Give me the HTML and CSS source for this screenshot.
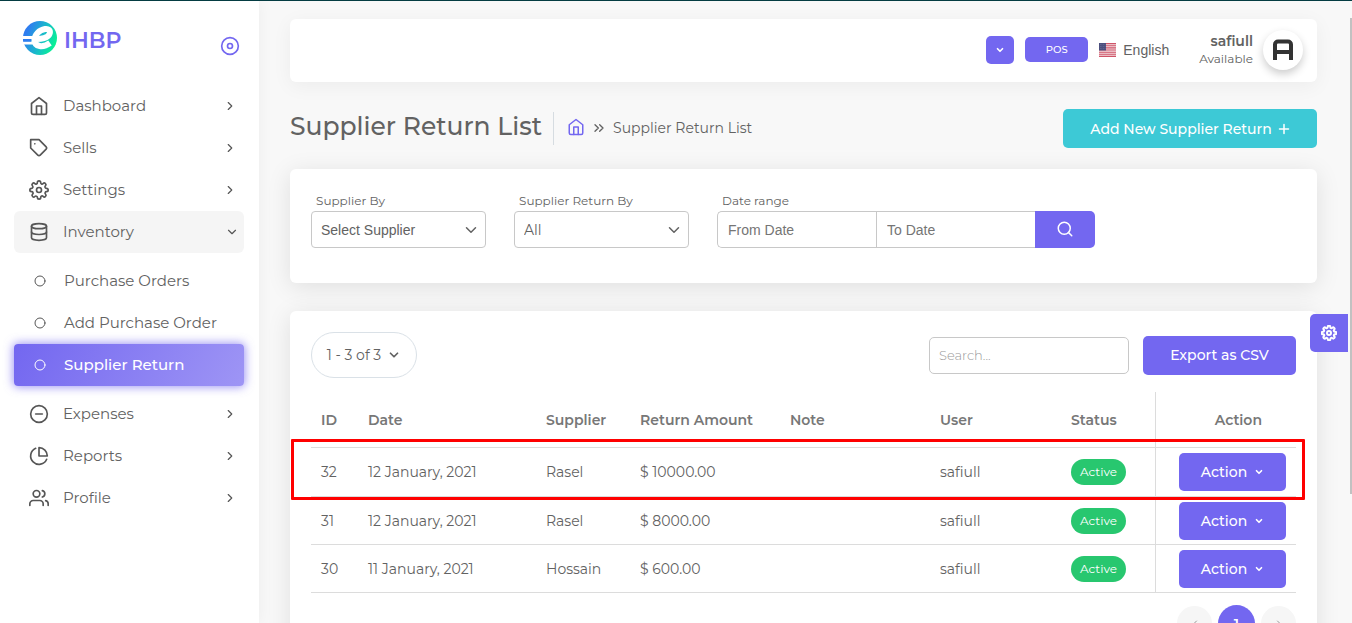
FILE: index.html
```html
<!DOCTYPE html>
<html lang="en">
<head>
<meta charset="utf-8">
<title>Supplier Return List - IHBP</title>
<meta name="viewport" content="width=device-width, initial-scale=1">
<link rel="stylesheet" href="styles.css">
</head>
<body>
<svg class="sprite" aria-hidden="true">
  <symbol id="home" viewBox="0 0 24 24"><path d="M3 9l9-7 9 7v11a2 2 0 0 1-2 2H5a2 2 0 0 1-2-2z"/><path d="M9 22V12h6v10"/></symbol>
  <symbol id="tag" viewBox="0 0 24 24"><path d="M20.59 13.41l-7.17 7.17a2 2 0 0 1-2.83 0L2 12V2h10l8.59 8.59a2 2 0 0 1 0 2.82z"/><path d="M7 7h.01"/></symbol>
  <symbol id="gear" viewBox="0 0 24 24"><circle cx="12" cy="12" r="3"/><path d="M19.4 15a1.65 1.65 0 0 0 .33 1.82l.06.06a2 2 0 0 1-2.83 2.83l-.06-.06a1.65 1.65 0 0 0-2.8 1.17V21a2 2 0 0 1-4 0v-.09A1.65 1.65 0 0 0 9 19.4a1.65 1.65 0 0 0-1.82.33l-.06.06a2 2 0 0 1-2.83-2.83l.06-.06A1.65 1.65 0 0 0 3.090 14H3a2 2 0 0 1 0-4h.09A1.65 1.65 0 0 0 4.6 9a1.65 1.65 0 0 0-.33-1.82l-.06-.06a2 2 0 0 1 2.830-2.83l.06.06A1.65 1.65 0 0 0 10 3.090V3a2 2 0 0 1 4 0v.09a1.65 1.65 0 0 0 2.820 1.240l.06-.06a2 2 0 0 1 2.830 2.830l-.06.06A1.65 1.65 0 0 0 20.910 10H21a2 2 0 0 1 0 4h-.09a1.65 1.65 0 0 0-1.510 1z"/></symbol>
  <symbol id="database" viewBox="0 0 24 24"><ellipse cx="12" cy="5" rx="9" ry="3"/><path d="M21 12c0 1.660-4 3-9 3s-9-1.340-9-3"/><path d="M3 5v14c0 1.660 4 3 9 3s9-1.340 9-3V5"/></symbol>
  <symbol id="minus-circle" viewBox="0 0 24 24"><circle cx="12" cy="12" r="10"/><path d="M8 12h8"/></symbol>
  <symbol id="pie" viewBox="0 0 24 24"><path d="M21.210 15.890A10 10 0 1 1 8 2.830"/><path d="M22 12A10 10 0 0 0 12 2v10z"/></symbol>
  <symbol id="users" viewBox="0 0 24 24"><path d="M17 21v-2a4 4 0 0 0-4-4H5a4 4 0 0 0-4 4v2"/><circle cx="9" cy="7" r="4"/><path d="M23 21v-2a4 4 0 0 0-3-3.870"/><path d="M16 3.130a4 4 0 0 1 0 7.750"/></symbol>
  <symbol id="right" viewBox="0 0 24 24"><path d="M9 18l6-6-6-6"/></symbol>
  <symbol id="left" viewBox="0 0 24 24"><path d="M15 18l-6-6 6-6"/></symbol>
  <symbol id="double-right" viewBox="0 0 24 24"><path d="M13 17l5-5-5-5M6 17l5-5-5-5"/></symbol>
  <symbol id="down" viewBox="0 0 24 24"><path d="M6 9l6 6 6-6"/></symbol>
  <symbol id="ring" viewBox="0 0 24 24"><circle cx="12" cy="12" r="10"/></symbol>
  <symbol id="disc" viewBox="0 0 24 24"><circle cx="12" cy="12" r="10"/><circle cx="12" cy="12" r="3"/></symbol>
  <symbol id="search" viewBox="0 0 24 24"><circle cx="11" cy="11" r="8"/><path d="M21 21l-4.350-4.350"/></symbol>
  <symbol id="plus" viewBox="0 0 24 24"><path d="M12 3v18M3 12h18"/></symbol>
</svg>
<div class="app">
  <aside class="sidebar">
    <div class="brand">
      <a class="brand-link" href="#">
        <svg class="logo" viewBox="0 0 36 36" aria-hidden="true">
          <defs><linearGradient id="lg" x1="0" x2="1" y1="0.3" y2="0.7"><stop offset="0.1" stop-color="#2f7df0"/><stop offset="0.6" stop-color="#16c3c4"/><stop offset="1" stop-color="#06f98c"/></linearGradient></defs>
          <circle cx="18" cy="18" r="17" fill="url(#lg)"/>
          <path d="M0 17.500h11M0 23h12" stroke="#fff" stroke-width="3"/>
          <path d="M1 19h8v2.600H1z" fill="#2f7df0"/>
          <path d="M13 19C19 19.500 26 18 27.500 14C29 10 26 8.500 23 9C17 10 12.500 15 12.500 20C12.500 27 21 28 28 23" fill="none" stroke="#fff" stroke-width="6"/>
        </svg>
        <span class="brand-name">IHBP</span>
      </a>
      <button class="plain pin" aria-label="Toggle menu"><svg class="icon i20"><use href="#disc"/></svg></button>
    </div>
    <nav class="menu" aria-label="Main">
      <a class="item" href="#"><svg class="icon i20"><use href="#home"/></svg><span>Dashboard</span><svg class="icon i14"><use href="#right"/></svg></a>
      <a class="item" href="#"><svg class="icon i20"><use href="#tag"/></svg><span>Sells</span><svg class="icon i14"><use href="#right"/></svg></a>
      <a class="item" href="#"><svg class="icon i20"><use href="#gear"/></svg><span>Settings</span><svg class="icon i14"><use href="#right"/></svg></a>
      <a class="item open" href="#"><svg class="icon i20"><use href="#database"/></svg><span>Inventory</span><svg class="icon i14"><use href="#down"/></svg></a>
      <div class="submenu">
        <a class="item sub" href="#"><svg class="icon i12"><use href="#ring"/></svg><span>Purchase Orders</span></a>
        <a class="item sub" href="#"><svg class="icon i12"><use href="#ring"/></svg><span>Add Purchase Order</span></a>
        <a class="item sub active" href="#" aria-current="page"><svg class="icon i12"><use href="#ring"/></svg><span>Supplier Return</span></a>
      </div>
      <a class="item" href="#"><svg class="icon i20"><use href="#minus-circle"/></svg><span>Expenses</span><svg class="icon i14"><use href="#right"/></svg></a>
      <a class="item" href="#"><svg class="icon i20"><use href="#pie"/></svg><span>Reports</span><svg class="icon i14"><use href="#right"/></svg></a>
      <a class="item" href="#"><svg class="icon i20"><use href="#users"/></svg><span>Profile</span><svg class="icon i14"><use href="#right"/></svg></a>
    </nav>
  </aside>

  <main class="main">
    <header class="card topbar">
      <button class="btn square" aria-label="Quick menu"><svg class="icon i10 bold"><use href="#down"/></svg></button>
      <button class="btn pos">POS</button>
      <a class="lang" href="#">
        <svg class="flag" viewBox="0 0 17 14" aria-hidden="true"><path fill="#f3dfe2" d="M0 0h17v14H0z"/><path stroke="#cf5468" stroke-width="1.100" d="M0 .6h17M0 2.700h17M0 4.900h17M0 7h17M0 9.200h17M0 11.300h17M0 13.400h17"/><path fill="#4c4f7e" d="M0 0h7v7.500H0z"/><path stroke="#8586a8" stroke-width=".6" stroke-dasharray=".6 1" d="M1 1.500h5.500M1 3.500h5.500M1 5.500h5.500"/></svg>
        <span>English</span>
      </a>
      <div class="user"><strong>safiull</strong><span>Available</span></div>
      <button class="avatar" aria-label="Account"><svg viewBox="0 0 22 22" aria-hidden="true"><path d="M3 21V5.500a3 3 0 0 1 3-3h10a3 3 0 0 1 3 3V21M3 13h16" fill="none" stroke="#333" stroke-width="4"/></svg></button>
    </header>

    <div class="heading">
      <h1>Supplier Return List</h1>
      <nav class="crumbs" aria-label="Breadcrumb">
        <a href="#" aria-label="Home"><svg class="icon i18"><use href="#home"/></svg></a>
        <svg class="icon i16"><use href="#double-right"/></svg>
        <span>Supplier Return List</span>
      </nav>
      <button class="btn add">Add New Supplier Return <svg class="icon i12"><use href="#plus"/></svg></button>
    </div>

    <form class="card filters">
      <div class="field">
        <label for="supplier">Supplier By</label>
        <div class="select"><select id="supplier"><option>Select Supplier</option></select><svg class="icon i18"><use href="#down"/></svg></div>
      </div>
      <div class="field">
        <label for="return-by">Supplier Return By</label>
        <div class="select"><select id="return-by" class="light"><option>All</option></select><svg class="icon i18"><use href="#down"/></svg></div>
      </div>
      <div class="field range">
        <label for="from">Date range</label>
        <div class="group">
          <input id="from" type="text" placeholder="From Date">
          <input type="text" placeholder="To Date" aria-label="To Date">
          <button class="btn find" type="button" aria-label="Search"><svg class="icon i18"><use href="#search"/></svg></button>
        </div>
      </div>
    </form>

    <section class="card list">
      <div class="tools">
        <button class="pager">1 - 3 of 3 <svg class="icon i14"><use href="#down"/></svg></button>
        <input class="search" type="text" placeholder="Search..." aria-label="Search">
        <button class="btn export">Export as CSV</button>
      </div>
      <table>
        <colgroup><col class="c-id"><col class="c-date"><col class="c-sup"><col class="c-amt"><col class="c-note"><col class="c-user"><col class="c-stat"><col class="c-act"></colgroup>
        <thead><tr><th>ID</th><th>Date</th><th>Supplier</th><th>Return Amount</th><th>Note</th><th>User</th><th>Status</th><th>Action</th></tr></thead>
        <tbody>
          <tr class="marked"><td>32</td><td>12 January, 2021</td><td>Rasel</td><td>$ 10000.00</td><td></td><td>safiull</td><td><span class="badge">Active</span></td><td><button class="btn action">Action <svg class="icon i10 bold"><use href="#down"/></svg></button></td></tr>
          <tr><td>31</td><td>12 January, 2021</td><td>Rasel</td><td>$ 8000.00</td><td></td><td>safiull</td><td><span class="badge">Active</span></td><td><button class="btn action">Action <svg class="icon i10 bold"><use href="#down"/></svg></button></td></tr>
          <tr><td>30</td><td>11 January, 2021</td><td>Hossain</td><td>$ 600.00</td><td></td><td>safiull</td><td><span class="badge">Active</span></td><td><button class="btn action">Action <svg class="icon i10 bold"><use href="#down"/></svg></button></td></tr>
        </tbody>
      </table>
      <nav class="pages" aria-label="Pages">
        <button class="page" aria-label="Previous"><svg class="icon i12"><use href="#left"/></svg></button>
        <button class="page current">1</button>
        <button class="page" aria-label="Next"><svg class="icon i12"><use href="#right"/></svg></button>
      </nav>
    </section>
  </main>
  <button class="btn customize" aria-label="Customize"><svg class="icon i16"><use href="#gear"/></svg></button>
  <div class="scroll"></div>
</div>
</body>
</html>
```
FILE: styles.css
```css
* { box-sizing: border-box; }

body {
  margin: 0;
  background: #f8f8f8;
  color: #626262;
  font: 400 14px/20px Montserrat, Inter, sans-serif;
}

button, input, select { font: inherit; color: inherit; margin: 0; }
button { cursor: pointer; }
a { color: inherit; text-decoration: none; }

.sprite { position: absolute; width: 0; height: 0; }
.icon { fill: none; stroke: currentColor; stroke-width: 2; stroke-linecap: round; stroke-linejoin: round; flex: none; }
.bold { stroke-width: 4; }
.i10 { width: 10px; height: 10px; }
.i12 { width: 12px; height: 12px; }
.i14 { width: 14px; height: 14px; }
.i16 { width: 16px; height: 16px; }
.i18 { width: 18px; height: 18px; }
.i20 { width: 20px; height: 20px; }

.app {
  position: relative;
  display: flex;
  height: 100vh;
  overflow: hidden;
  border-top: 1px solid #043c42;
}

/* Sidebar */
.sidebar {
  flex: 0 0 259px;
  background: #fff;
  box-shadow: 0 0 15px rgba(0, 0, 0, .05);
}
.brand { display: flex; align-items: flex-start; justify-content: space-between; padding: 19px 19px 0 22px; }
.brand-link { display: flex; align-items: flex-start; gap: 6px; }
.logo { width: 36px; height: 36px; }
.brand-name { color: #7367f0; font-size: 22px; font-weight: 600; line-height: 42px; }
.plain { border: 0; padding: 0; background: none; }
.pin { display: flex; color: #7367f0; padding-top: 16px; }

.menu { padding: 23px 15px 0 14px; }
.item {
  display: flex;
  align-items: center;
  height: 42px;
  padding: 0 7px 0 15px;
  border-radius: 4px;
  font-size: 15px;
}
.item span { flex: 1; margin-left: 14px; }
.item .icon { color: #565656; }
.item.open { background: #f5f5f5; border-radius: 6px; }
.item.open .i14:last-child { margin-right: -2px; }
.submenu { padding: 7px 0; }
.item.sub { padding-left: 20px; }
.item.sub span { margin-left: 18px; }
.item.active {
  color: #fff;
  font-weight: 500;
  background: linear-gradient(118deg, #7367f0, #9e95f5);
  box-shadow: 0 0 10px 1px rgba(115, 103, 240, .7);
}
.item.active .icon { color: #fff; }

/* Main column */
.main { flex: 1; min-width: 0; padding: 18px 35px 0 31px; }
.card { background: #fff; border-radius: 6px; box-shadow: 0 4px 25px rgba(0, 0, 0, .1); }

.btn {
  display: inline-flex;
  align-items: center;
  justify-content: center;
  border: 0;
  border-radius: 5px;
  background: #7367f0;
  color: #fff;
  font-size: 14px;
  font-weight: 500;
}

.topbar {
  display: flex;
  align-items: center;
  justify-content: flex-end;
  height: 63px;
  padding: 0 14px 2px;
  box-shadow: 0 4px 20px rgba(0, 0, 0, .05);
}
.square { width: 28px; height: 28px; padding: 0; }
.pos { width: 63px; height: 25px; margin-left: 11px; padding: 0; font-size: 10px; }
.lang { display: flex; align-items: center; gap: 7px; margin-left: 11px; font-family: "Liberation Sans", Arial, sans-serif; font-size: 14px; }
.flag { width: 17px; height: 14px; }
.user { display: flex; flex-direction: column; align-items: flex-end; margin: 0 10px 0 30px; font-size: 12px; line-height: 17px; }
.user strong { font-size: 14px; font-weight: 600; }
.avatar {
  display: flex;
  align-items: center;
  justify-content: center;
  width: 40px;
  height: 40px;
  padding: 0;
  border: 0;
  border-radius: 50%;
  background: #fff;
  box-shadow: 0 4px 8px rgba(0, 0, 0, .2);
}
.avatar svg { width: 22px; height: 22px; }

.heading { display: flex; align-items: center; margin: 27px 0 21px; }
h1 { margin: 0; padding: 0 11px 4px 0; border-right: 1px solid #d6dce1; font-size: 25px; font-weight: 500; line-height: 29px; }
.crumbs { display: flex; align-items: center; gap: 6px; margin-left: 13px; padding-bottom: 2px; }
.crumbs a { display: flex; padding-bottom: 2px; color: #7367f0; }
.add { width: 254px; height: 39px; margin-left: auto; gap: 6px; background: #3dc9d6; }
.add .icon { stroke-width: 3; }

/* Filters */
.filters { display: flex; align-items: flex-start; gap: 28px; min-height: 114px; padding: 21px; }
.field { flex: 0 1 175px; min-width: 0; }
.field label { display: block; padding-left: 5px; font-size: 12px; line-height: 21px; }
.range { flex-basis: 378px; }
.select { position: relative; }
.select select {
  width: 100%;
  height: 37px;
  padding: 0 9px;
  border: 1px solid #c8c8c8;
  border-radius: 4px;
  background: #fff;
  appearance: none;
  font: 14px "Liberation Sans", Arial, sans-serif;
}
.select .icon { position: absolute; right: 6px; top: 10px; pointer-events: none; }
.select .light { font-family: Montserrat, Inter, sans-serif; }
.group { display: flex; }
.group input {
  flex: 1;
  min-width: 0;
  height: 37px;
  padding: 0 10px;
  border: 1px solid #c8c8c8;
  border-right: 0;
  background: #fff;
  font: 14px "Liberation Sans", Arial, sans-serif;
}
.group input:first-child { border-radius: 5px 0 0 5px; }
.group input::placeholder { color: #757575; }
.find { width: 60px; height: 37px; padding: 0 0 2px; border-radius: 0 5px 5px 0; }

/* Return list */
.list { margin-top: 28px; padding: 21px 21px 40px; }
.tools { display: flex; align-items: center; }
.pager {
  display: flex;
  align-items: center;
  justify-content: center;
  gap: 6px;
  width: 106px;
  height: 46px;
  padding: 0;
  border: 1px solid #dae1e7;
  border-radius: 23px;
  background: #fff;
}
.pager .icon { stroke-width: 3; }
.search {
  width: 200px;
  height: 37px;
  margin: 0 14px 0 auto;
  padding: 0 9px;
  border: 1px solid #c8c8c8;
  border-radius: 5px;
  font-size: 13px;
  font-weight: 300;
}
.search::placeholder { color: #999; }
.export { width: 153px; height: 39px; }

table { width: 100%; margin-top: 14px; border-collapse: separate; border-spacing: 0; table-layout: fixed; }
.c-id { width: 47px; }
.c-date { width: 178px; }
.c-sup { width: 94px; }
.c-amt { width: 150px; }
.c-note { width: 150px; }
.c-user { width: 131px; }
.c-stat { width: 94px; }
.c-act { width: 141px; }
th, td { padding: 0 10px; border-bottom: 1px solid #dcdcdc; text-align: left; white-space: nowrap; }
th { height: 56px; font-size: 14px; font-weight: 600; color: #777; }
td { height: 48px; }
th:last-child, td:last-child { border-left: 1px solid #dcdcdc; text-align: right; }
th:last-child { padding-right: 34px; }
.marked { position: relative; }
.marked td { height: 49px; }
.marked::after {
  content: "";
  position: absolute;
  inset: -9px -9px -3px -20px;
  border: 3px solid #f00;
  border-radius: 1px;
  pointer-events: none;
}
.badge { display: inline-block; padding: 0 9px; border-radius: 13px; background: #28c76f; color: #fff; font-size: 12px; line-height: 26px; }
.action { width: 107px; height: 38px; gap: 7px; vertical-align: middle; }

.pages { display: flex; align-items: center; justify-content: flex-end; gap: 6px; margin-top: 12px; }
.page { display: flex; align-items: center; justify-content: center; width: 35px; height: 35px; padding: 0; border: 0; border-radius: 50%; background: #f6f6f6; color: #999; }
.page.current { width: 37px; height: 37px; background: #7367f0; color: #fff; font-weight: 600; }

/* Floating controls */
.customize { position: absolute; right: 4px; top: 313px; width: 38px; height: 38px; padding: 0; border-radius: 5px 0 0 5px; }
.customize .icon { stroke-width: 3; }
.scroll { position: absolute; right: 0; top: 17px; width: 2px; height: 476px; background: #c1c1c1; }
```
